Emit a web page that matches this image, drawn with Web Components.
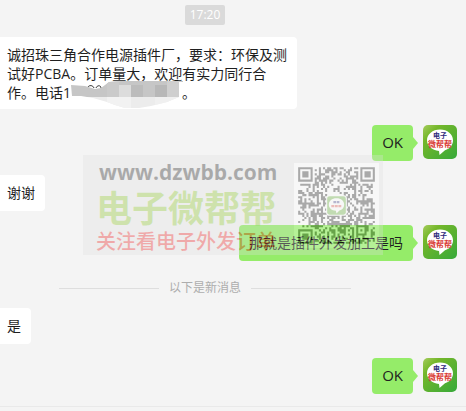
<!DOCTYPE html>
<html lang="zh-CN">
<head>
<meta charset="utf-8">
<title>聊天</title>
<style>
    body {
        margin: 0;
        background: #f4f4f4;
        color: #1f1f1f;
        font-family: "Open Sans", "Noto Sans CJK SC", sans-serif;
        font-size: 14px;
        line-height: 19px;
    }

    .latin {
        font-size: 15px;
    }
</style>
</head>
<body>
<chat-window>
    <chat-time>17:20</chat-time>
    <chat-message>诚招珠三角合作电源插件厂，要求：环保及测试好PCBA。订单量大，欢迎有实力同行合作。电话1<blurred-number></blurred-number>。</chat-message>
    <chat-message mine><span class="latin">OK</span></chat-message>
    <chat-message>谢谢</chat-message>
    <chat-message mine>那就是插件外发加工是吗</chat-message>
    <chat-divider>以下是新消息</chat-divider>
    <chat-message>是</chat-message>
    <chat-message mine><span class="latin">OK</span></chat-message>
    <site-watermark slot="overlay"></site-watermark>
</chat-window>

<script>
const windowTemplate = document.createElement('template');
windowTemplate.innerHTML = `
    <style>
        :host {
            display: flex;
            flex-direction: column;
            position: relative;
            min-height: 100vh;
            overflow: hidden;
        }

        main {
            display: flex;
            flex: 1;
            flex-direction: column;
            gap: 14px;
            padding: 5px 9px 12px 0;
            border-bottom: 1px solid #e9e9e9;
        }

        main ::slotted(chat-message:first-of-type) {
            margin-bottom: 2px;
        }

        footer {
            height: 4px;
        }
    </style>
    <main><slot></slot></main>
    <footer></footer>
    <slot name="overlay"></slot>
`;

class ChatWindow extends HTMLElement {
    constructor() {
        super();
        this.attachShadow({mode: 'open'}).appendChild(windowTemplate.content.cloneNode(true));
    }
}

const timeTemplate = document.createElement('template');
timeTemplate.innerHTML = `
    <style>
        :host {
            display: flex;
            justify-content: center;
            margin-right: 47px;
            margin-bottom: -2px;
        }

        time {
            padding: 0 5px;
            border-radius: 2px;
            background: #dadada;
            color: white;
            font-size: 12px;
            line-height: 20px;
        }
    </style>
    <time><slot></slot></time>
`;

class ChatTime extends HTMLElement {
    constructor() {
        super();
        this.attachShadow({mode: 'open'}).appendChild(timeTemplate.content.cloneNode(true));
    }
}

const dividerTemplate = document.createElement('template');
dividerTemplate.innerHTML = `
    <style>
        :host {
            display: flex;
            align-items: center;
            gap: 10px;
            margin: 5px 106px -2px 59px;
            color: #adadad;
            font-size: 12px;
            line-height: 16px;
            white-space: nowrap;
        }

        hr {
            flex: 1;
            margin: 0;
            border: none;
            border-top: 1px solid #dedede;
        }
    </style>
    <hr>
    <span><slot></slot></span>
    <hr>
`;

class ChatDivider extends HTMLElement {
    constructor() {
        super();
        this.attachShadow({mode: 'open'}).appendChild(dividerTemplate.content.cloneNode(true));
    }
}

const avatarTemplate = document.createElement('template');
avatarTemplate.innerHTML = `
    <style>
        :host {
            display: block;
            width: 34px;
            height: 34px;
        }

        svg {
            display: block;
            width: 100%;
            height: 100%;
        }

        text {
            font-family: "Noto Sans CJK SC", sans-serif;
            font-weight: 700;
            text-anchor: middle;
        }
    </style>
    <svg viewBox="0 0 34 34" role="img" aria-label="电子微帮帮">
        <defs>
            <linearGradient id="leaf" x1="0" y1="0" x2="1" y2="1">
                <stop offset="0" stop-color="#a5cc5c"/>
                <stop offset="0.25" stop-color="#74b72a"/>
                <stop offset="1" stop-color="#36a93a"/>
            </linearGradient>
        </defs>
        <rect width="34" height="34" rx="5" fill="url(#leaf)"/>
        <path d="M17 4.5C9.500 4.500 4 9.300 4 15.300C4 21 9 25.300 16 26L16.500 30L22 25.200C27 23.800 30 20 30 15.300C30 9.300 24.500 4.500 17 4.500Z" fill="#fff"/>
        <text x="17" y="13" font-size="7" fill="#2d2a7c">电子</text>
        <text x="17" y="22" font-size="8" fill="#d93a34">微帮帮</text>
    </svg>
`;

class ChatAvatar extends HTMLElement {
    constructor() {
        super();
        this.attachShadow({mode: 'open'}).appendChild(avatarTemplate.content.cloneNode(true));
    }
}

const messageTemplate = document.createElement('template');
messageTemplate.innerHTML = `
    <style>
        :host {
            display: flex;
            align-items: flex-start;
            gap: 10px;
        }

        :host([mine]) {
            justify-content: flex-end;
        }

        .bubble {
            position: relative;
            box-sizing: border-box;
            min-height: 36px;
            max-width: 297px;
            padding: 8px 10px 7px 7px;
            border-radius: 0 4px 4px 0;
            background: white;
        }

        :host([mine]) .bubble {
            padding-left: 10px;
            border-radius: 4px;
            background: #95ec69;
        }

        :host([mine]) .bubble::after {
            content: "";
            position: absolute;
            top: 12px;
            left: 100%;
            border: 6px solid transparent;
            border-left: 5px solid #95ec69;
            border-right: none;
        }

        chat-avatar {
            display: none;
            flex: none;
        }

        :host([mine]) chat-avatar {
            display: block;
        }
    </style>
    <div class="bubble"><slot></slot></div>
    <chat-avatar></chat-avatar>
`;

class ChatMessage extends HTMLElement {
    constructor() {
        super();
        this.attachShadow({mode: 'open'}).appendChild(messageTemplate.content.cloneNode(true));
    }
}

const blurredTemplate = document.createElement('template');
blurredTemplate.innerHTML = `
    <style>
        :host {
            display: inline-block;
            width: 111px;
            height: 11px;
        }

        svg {
            display: block;
            overflow: visible;
        }
    </style>
    <svg width="111" height="10" viewBox="0 0 111 10" aria-hidden="true">
        <defs>
            <clipPath id="smear">
                <path d="M0 -2L14 -1L24 2L30 1L38 -5L50 -6H112V-5H108V10L96 15L80 19L68 21H54L44 18L36 15L22 11L10 9H1Z"/>
            </clipPath>
        </defs>
        <path d="M2 8V9M17 0C18 -2 22 -2 23 1M25 1C26 -2 30 -2 30 1" fill="none" stroke="#333"/>
        <g clip-path="url(#smear)">
            <rect y="-6" width="112" height="16" fill="#c6c6c6"/>
            <rect y="-6" x="36" width="12" height="16" fill="#cacaca"/>
            <rect y="-2" x="48" width="12" height="12" fill="#dcdcdc"/>
            <rect y="-2" x="60" width="12" height="12" fill="#bcbcbc"/>
            <rect y="-2" x="84" width="12" height="12" fill="#b8b8b8"/>
            <rect y="-6" x="96" width="14" height="16" fill="#cfcfcf"/>
            <rect y="10" width="112" height="12" fill="#ececec"/>
            <rect y="10" x="36" width="24" height="12" fill="#f2f2f2"/>
            <rect y="10" x="84" width="24" height="12" fill="#f0f0f0"/>
        </g>
    </svg>
`;

class BlurredNumber extends HTMLElement {
    constructor() {
        super();
        this.attachShadow({mode: 'open'}).appendChild(blurredTemplate.content.cloneNode(true));
    }
}

const watermarkTemplate = document.createElement('template');
watermarkTemplate.innerHTML = `
    <style>
        :host {
            position: absolute;
            top: 155px;
            left: 50%;
            display: flex;
            align-items: center;
            box-sizing: border-box;
            width: 300px;
            height: 100px;
            margin-left: -150px;
            padding: 0 4px 0 13px;
            background: #e0e0e0;
            opacity: 0.3;
            pointer-events: none;
            font-family: "Noto Sans CJK SC", sans-serif;
            font-weight: 700;
            white-space: nowrap;
        }

        .words {
            display: flex;
            flex: 1;
            flex-direction: column;
            padding-top: 4px;
        }

        .site {
            padding-left: 3px;
            color: black;
            font-family: "Open Sans", sans-serif;
            font-size: 21px;
            line-height: 20px;
        }

        .brand {
            color: #78bb0a;
            font-size: 36px;
            line-height: 48px;
        }

        .slogan {
            color: #e60000;
            font-size: 20px;
            font-weight: 500;
            line-height: 22px;
        }

        .code {
            flex: none;
            width: 85px;
            height: 85px;
        }
    </style>
    <div class="words">
        <span class="site">www.dzwbb.com</span>
        <span class="brand">电子微帮帮</span>
        <span class="slogan">关注看电子外发订单</span>
    </div>
    <svg class="code" viewBox="-2 -2 41 41" aria-hidden="true">
        <rect x="-2" y="-2" width="41" height="41" fill="#fff"/>
        <path class="modules" fill="#000"/>
        <rect x="13.500" y="13.500" width="10" height="10" rx="1.500" fill="#fff"/>
        <rect x="14" y="14" width="9" height="9" rx="1.200" fill="#4fa51c"/>
        <path d="M18.500 15C16.300 15 14.800 16.300 14.800 18.100C14.800 19.700 16.200 20.900 18.200 21L18.500 22.300L19.900 20.900C21.300 20.500 22.200 19.500 22.200 18.100C22.200 16.300 20.700 15 18.500 15Z" fill="#fff"/>
        <path d="M17 16.900H20" stroke="#2d2a7c" stroke-width="1.100" stroke-dasharray="1.300 0.300"/>
        <path d="M16 18.800H21" stroke="#d93a34" stroke-width="1.200" stroke-dasharray="1.400 0.300"/>
    </svg>
`;

const CODE_SIZE = 37;

class SiteWatermark extends HTMLElement {
    constructor() {
        super();
        this.attachShadow({mode: 'open'}).appendChild(watermarkTemplate.content.cloneNode(true));
        this.shadowRoot.querySelector('.modules').setAttribute('d', this.modulesPath());
    }

    // square rings: 7 wide in three corners, 5 wide near the fourth
    ring(x, y, left, top, size) {
        const half = (size - 1) / 2;
        const distance = Math.max(Math.abs(x - left - half), Math.abs(y - top - half));
        if (size === 5) return distance > half ? null : distance !== 1;
        if (distance > half + 1) return null;
        return distance === 3 || distance < 2;
    }

    modulesPath() {
        let seed = 20;
        let path = '';
        for (let y = 0; y < CODE_SIZE; y++) {
            for (let x = 0; x < CODE_SIZE; x++) {
                seed = (seed * 1103515245 + 12345) % 2147483648;
                let dark = this.ring(x, y, 0, 0, 7)
                    ?? this.ring(x, y, CODE_SIZE - 7, 0, 7)
                    ?? this.ring(x, y, 0, CODE_SIZE - 7, 7)
                    ?? this.ring(x, y, CODE_SIZE - 9, CODE_SIZE - 9, 5)
                    ?? seed / 2147483648 > 0.5;
                if (dark) path += `M${x} ${y}h1v1h-1z`;
            }
        }
        return path;
    }
}

customElements.define('chat-window', ChatWindow);
customElements.define('chat-time', ChatTime);
customElements.define('chat-divider', ChatDivider);
customElements.define('chat-avatar', ChatAvatar);
customElements.define('chat-message', ChatMessage);
customElements.define('blurred-number', BlurredNumber);
customElements.define('site-watermark', SiteWatermark);
</script>
</body>
</html>
